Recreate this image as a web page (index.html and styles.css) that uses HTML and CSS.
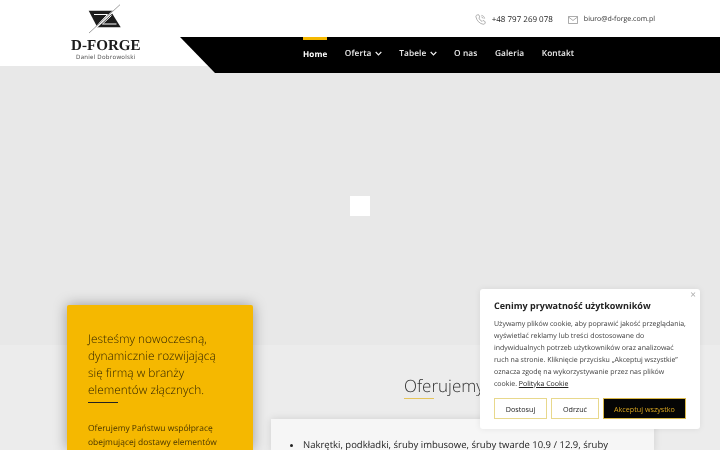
FILE: index.html
```html
<!DOCTYPE html>
<html lang="pl">
<head>
<meta charset="utf-8">
<title>D-FORGE</title>
<link rel="stylesheet" href="styles.css">
</head>
<body>
<header class="site-header">
  <a class="logo" href="#">
    <svg class="logo-mark" width="40" height="34" viewBox="0 0 40 34" aria-hidden="true">
      <path class="mark-dark" d="M2.700 8.700H28L11.300 25.300Z"/>
      <path class="mark-dark" d="M25.700 10.700L34.700 25.300H9Z"/>
      <path class="mark-cut" d="M8 12.500H21.500L13 21.500M30.500 22H16.500L25.500 13.500"/>
      <path class="mark-gap" d="M4 31L34 3"/>
      <path class="mark-slash" d="M3 31L34 2.700"/>
    </svg>
    <span class="logo-name">D-FORGE</span>
    <span class="logo-sub">Daniel Dobrowolski</span>
  </a>
  <div class="header-right">
    <div class="contact-bar">
      <span class="contact phone">
        <svg width="11" height="11" viewBox="0 0 12 12" aria-hidden="true"><path class="line-icon" d="M2.500 1L4 .8L5.300 3.300L4.300 4.300C4.800 6 6 7.300 7.800 8L8.800 7L11.200 8.500L11 10C10.800 10.800 10 11.300 9 11.200C5 10.500 1.800 7.300 1 3C.9 2 1.500 1.300 2.500 1Z"/><path class="line-icon" d="M7 1.500C8.800 1.700 10.200 3 10.500 5M7 3.200C8 3.400 8.700 4 8.900 5"/></svg>
        <span>+48 797 269 078</span>
      </span>
      <span class="contact mail">
        <svg width="10" height="8" viewBox="0 0 10 8" aria-hidden="true"><path class="line-icon" d="M.5.5H9.500V7.500H.5ZM.5 1L5 4.500L9.500 1"/></svg>
        <span>biuro@d-forge.com.pl</span>
      </span>
    </div>
    <nav class="main-nav">
      <a class="nav-link active" href="#">Home</a>
      <a class="nav-link" href="#">Oferta <svg class="chev" width="7" height="5" viewBox="0 0 7 5"><path d="M.7 1L3.500 3.800L6.300 1"/></svg></a>
      <a class="nav-link" href="#">Tabele <svg class="chev" width="7" height="5" viewBox="0 0 7 5"><path d="M.7 1L3.500 3.800L6.300 1"/></svg></a>
      <a class="nav-link" href="#">O nas</a>
      <a class="nav-link" href="#">Galeria</a>
      <a class="nav-link" href="#">Kontakt</a>
    </nav>
  </div>
</header>

<section class="hero">
  <div class="loader"></div>
</section>

<main class="content">
  <aside class="intro-card">
    <h2 class="intro-title">Jesteśmy nowoczesną, dynamicznie rozwijającą się firmą w branży elementów złącznych.</h2>
    <div class="intro-rule"></div>
    <p class="intro-text">Oferujemy Państwu współpracę obejmującej dostawy elementów</p>
  </aside>
  <div class="offer">
    <h2 class="offer-title">Oferujemy</h2>
    <div class="offer-card">
      <ul class="offer-list">
        <li>Nakrętki, podkładki, śruby imbusowe, śruby twarde 10.9 / 12.9, śruby</li>
      </ul>
    </div>
  </div>
</main>

<div class="cookie">
  <span class="cookie-close">×</span>
  <h3 class="cookie-title">Cenimy prywatność użytkowników</h3>
  <p class="cookie-text">Używamy plików cookie, aby poprawić jakość przeglądania, wyświetlać reklamy lub treści dostosowane do indywidualnych potrzeb użytkowników oraz analizować ruch na stronie. Kliknięcie przycisku „Akceptuj wszystkie” oznacza zgodę na wykorzystywanie przez nas plików cookie. <a href="#">Polityka Cookie</a></p>
  <div class="cookie-actions">
    <button class="btn btn-light btn-a">Dostosuj</button>
    <button class="btn btn-light btn-b">Odrzuć</button>
    <button class="btn btn-dark">Akceptuj wszystko</button>
  </div>
</div>
</body>
</html>
```
FILE: styles.css
```css
* { box-sizing: border-box; }
html, body { margin: 0; padding: 0; height: 450px; overflow: hidden; }
html { background: #ececec; }
body { font-family: "Open Sans", sans-serif; background: #ececec; color: #222; text-rendering: geometricPrecision; filter: blur(.3px); }
a { color: inherit; text-decoration: none; }

.site-header { display: flex; height: 66px; background: #fff; position: relative; z-index: 2; }
.logo { width: 180px; padding-left: 71px; display: flex; flex-direction: column; }
.logo-mark { margin: 2px 0 0 15px; flex: none; }
.mark-dark { fill: #1c1c1c; }
.mark-cut { fill: none; stroke: #fff; stroke-width: 1; }
.mark-gap { fill: none; stroke: #fff; stroke-width: 1.800; }
.mark-slash { stroke: #777; stroke-width: .7; fill: none; }
.logo-name { font: 700 15.100px/13px "Liberation Serif", serif; color: #1c1c1c; margin-top: 4px; width: 72px; white-space: nowrap; }
.logo-sub { font-size: 6px; line-height: 8px; letter-spacing: .28px; color: #444; margin: 0 0 0 5px; white-space: nowrap; }

.header-right { flex: 1; display: flex; flex-direction: column; }
.contact-bar { flex: none; height: 37px; display: flex; align-items: center; justify-content: flex-end; padding: 2px 65px 0 0; gap: 15px; }
.contact { display: flex; align-items: center; }
.phone { font-size: 8px; color: #222; gap: 6px; }
.mail { font-size: 7px; color: #333; gap: 6px; }
.line-icon { fill: none; stroke: #888; stroke-width: .7; }

.main-nav { flex: none; height: 36px; background: #000; display: flex; gap: 17.500px; padding-left: 123px; clip-path: polygon(0 0, 100% 0, 100% 100%, 35px 100%); }
.nav-link { position: relative; color: #eee; font-size: 8.300px; font-weight: 600; line-height: 34px; letter-spacing: .1px; white-space: nowrap; display: block; }
.nav-link.active { color: #fff; font-weight: 700; font-size: 8.100px; border-top: 3px solid #f5b800; line-height: 29px; height: 36px; }
.chev { margin-left: 1px; }
.chev path { fill: none; stroke: #eee; stroke-width: 1.200; }

.hero { height: 279px; background: #e8e8e8; display: flex; align-items: center; justify-content: center; padding-top: 0; }
.loader { width: 20px; height: 20px; background: #fff; }

.content { display: flex; align-items: flex-start; padding-left: 67px; height: 105px; }
.intro-card { width: 186px; height: 145px; margin-top: -40px; background: #f5b800; padding: 26px 21px; color: #3a2b00; box-shadow: 0 0 14px rgba(0,0,0,.35); flex: none; position: relative; border-radius: 2px 2px 0 0; }
.intro-title { margin: 0; font-size: 11.900px; font-weight: 300; line-height: 17px; color: #2e2200; }
.intro-rule { width: 30px; height: 1px; background: #222; margin-top: 3px; }
.intro-text { margin: 19px 0 0; font-size: 8.450px; line-height: 14.300px; color: #4a3600; }

.offer { width: 383px; margin-left: 18px; }
.offer-title { margin: 30px 0 0 133px; width: max-content; font-size: 17px; line-height: 22px; font-weight: 300; color: #333; position: relative; padding-bottom: 2px; }
.offer-title::after { content: ""; position: absolute; left: 0; bottom: 0; width: 30px; height: 1px; background: #e5c45a; }
.offer-card { margin-top: 20px; background: #f6f6f6; height: 33px; padding: 19px 20px 0; box-shadow: 0 0 8px rgba(0,0,0,.12); }
.offer-list { margin: 0; padding-left: 12px; font-size: 9.500px; line-height: 14px; color: #222; }
.offer-list li { white-space: nowrap; }

.cookie { position: fixed; left: 480px; top: 289px; width: 220px; height: 140px; background: #fff; border-radius: 3px; padding: 11px 14px; box-shadow: 0 0 6px rgba(0,0,0,.08); z-index: 5; }
.cookie-close { position: absolute; right: 4px; top: 0; font-size: 10px; line-height: 10px; color: #aaa; }
.cookie-title { margin: 0; font-size: 9px; line-height: 12px; font-weight: 700; color: #222; }
.cookie-text { margin: 6.500px 0 0; font-size: 7px; line-height: 12px; color: #3c3c3c; }
.cookie-text a { color: #222; text-decoration: underline; }
.cookie-actions { display: flex; gap: 4px; margin-top: 7.500px; }
.btn { height: 21px; font: 400 7.200px "Open Sans", sans-serif; padding: 0; border: 1.500px solid #e8d88c; }
.btn-light { background: #fff; color: #222; }
.btn-a { width: 53px; }
.btn-b { width: 48px; }
.btn-dark { width: 83px; background: #050505; color: #d9a520; border-color: #d9b84a; }
```
